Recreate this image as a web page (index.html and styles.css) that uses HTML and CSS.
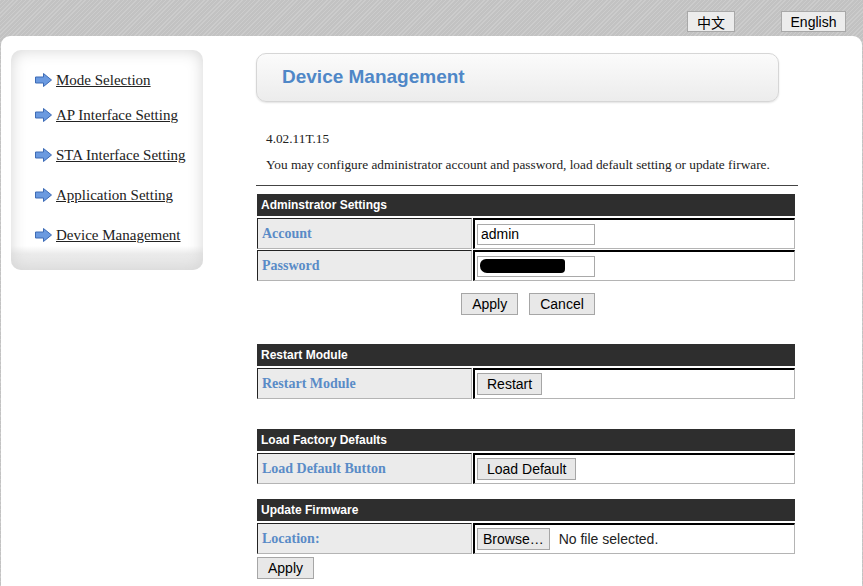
FILE: index.html
```html
<!DOCTYPE html>
<html lang="en">
<head>
    <meta charset="UTF-8">
    <meta name="viewport" content="width=device-width, initial-scale=1.0">
    <title>Device Management</title>
    <link rel="stylesheet" href="styles.css">
</head>
<body>
    <div class="lang-bar">
        <button class="lang-btn zh">中文</button>
        <button class="lang-btn en">English</button>
    </div>

    <div class="panel">
        <!-- Left menu -->
        <div class="side-menu">
            <a href="#"><svg class="arrow" viewBox="0 0 17 14"><polygon points="0.5,4 8.5,4 8.5,0.5 16.5,7 8.5,13.5 8.5,10 0.5,10"/></svg>Mode Selection</a>
            <a href="#"><svg class="arrow" viewBox="0 0 17 14"><polygon points="0.5,4 8.5,4 8.5,0.5 16.5,7 8.5,13.5 8.5,10 0.5,10"/></svg>AP Interface Setting</a>
            <a href="#"><svg class="arrow" viewBox="0 0 17 14"><polygon points="0.5,4 8.5,4 8.5,0.5 16.5,7 8.5,13.5 8.5,10 0.5,10"/></svg>STA Interface Setting</a>
            <a href="#"><svg class="arrow" viewBox="0 0 17 14"><polygon points="0.5,4 8.5,4 8.5,0.5 16.5,7 8.5,13.5 8.5,10 0.5,10"/></svg>Application Setting</a>
            <a href="#"><svg class="arrow" viewBox="0 0 17 14"><polygon points="0.5,4 8.5,4 8.5,0.5 16.5,7 8.5,13.5 8.5,10 0.5,10"/></svg>Device Management</a>
        </div>

        <!-- Main content -->
        <div class="main">
            <div class="page-title">
                <h1>Device Management</h1>
            </div>

            <p class="version">4.02.11T.15</p>
            <p class="intro">You may configure administrator account and password, load default setting or update firware.</p>
            <div class="rule"></div>

            <div class="section admin">
                <div class="section-head">Adminstrator Settings</div>
                <div class="row">
                    <div class="label">Account</div>
                    <div class="value"><input type="text" value="admin"></div>
                </div>
                <div class="row">
                    <div class="label">Password</div>
                    <div class="value"><span class="pw-box"><span class="pw-mask"></span></span></div>
                </div>
                <div class="actions">
                    <button class="btn">Apply</button>
                    <button class="btn">Cancel</button>
                </div>
            </div>

            <div class="section restart">
                <div class="section-head">Restart Module</div>
                <div class="row">
                    <div class="label">Restart Module</div>
                    <div class="value"><button class="btn small">Restart</button></div>
                </div>
            </div>

            <div class="section factory">
                <div class="section-head">Load Factory Defaults</div>
                <div class="row">
                    <div class="label">Load Default Button</div>
                    <div class="value"><button class="btn small">Load Default</button></div>
                </div>
            </div>

            <div class="section firmware">
                <div class="section-head">Update Firmware</div>
                <div class="row">
                    <div class="label">Location:</div>
                    <div class="value"><button class="btn browse">Browse…</button><span class="file-name">No file selected.</span></div>
                </div>
                <button class="btn apply-fw">Apply</button>
            </div>
        </div>
    </div>
</body>
</html>
```

FILE: styles.css
```css
body {
    margin: 0;
    padding: 0;
    font-family: "Liberation Serif", serif;
    background-color: #c8c8c8;
    background-image: repeating-linear-gradient(135deg, rgba(255,255,255,0.08) 0 1px, rgba(0,0,0,0.03) 1px 3px);
    overflow: hidden;
}

.lang-bar {
    height: 36px;
    display: flex;
    justify-content: flex-end;
    align-items: flex-start;
    padding-right: 17px;
    box-sizing: border-box;
}

.lang-btn {
    margin-top: 11px;
    height: 21px;
    padding: 0;
    font-family: "Liberation Sans", Arial, sans-serif;
    font-size: 14px;
    color: #000;
    background: #ececec;
    border: 1px solid #a8a8a8;
    border-radius: 0;
}

.lang-btn.zh {
    width: 48px;
    font-family: "Liberation Sans", "Noto Sans CJK SC", sans-serif;
    margin-right: 46px;
}

.lang-btn.en {
    width: 65px;
}

.panel {
    margin: 0 1px;
    height: 560px;
    background: #fff;
    border-radius: 9px 9px 0 0;
    display: flex;
    align-items: flex-start;
}

/* left menu */
.side-menu {
    width: 192px;
    height: 220px;
    margin: 14px 0 0 10px;
    box-sizing: border-box;
    padding: 20px 0 0 24px;
    border-radius: 10px;
    background: linear-gradient(to bottom, #fff 0, #fff 196px, #ebebeb 204px, #e6e6e6 100%);
    box-shadow: inset 0 0 16px #d4d4d4;
    display: flex;
    flex-direction: column;
}

.side-menu a {
    display: flex;
    align-items: center;
    height: 20px;
    margin-bottom: 20px;
    font-size: 15px;
    color: #222;
    text-decoration: underline;
    white-space: nowrap;
}

.side-menu a:first-child {
    margin-bottom: 15px;
}

.arrow {
    width: 17px;
    height: 14px;
    margin-right: 4px;
    flex-shrink: 0;
}

.arrow polygon {
    fill: #6b9ae0;
    stroke: #3d6bb5;
    stroke-width: 1;
}

/* main column */
.main {
    margin-left: 53px;
    width: 542px;
    padding-top: 17px;
}

.page-title {
    width: 523px;
    height: 49px;
    box-sizing: border-box;
    border: 1px solid #d6d6d6;
    border-radius: 10px;
    background: linear-gradient(to bottom, #fbfbfb, #ececec);
    box-shadow: 0 1px 2px #e2e2e2;
    padding-left: 25px;
    display: flex;
    align-items: center;
}

.page-title h1 {
    margin: 0 0 1px 0;
    font-family: "Liberation Sans", Arial, sans-serif;
    font-size: 19px;
    font-weight: bold;
    color: #4f87c7;
}

.version {
    margin: 29px 0 0 10px;
    font-size: 13.3px;
    color: #222;
}

.intro {
    margin: 10px 0 0 10px;
    font-size: 13.3px;
    color: #222;
}

.rule {
    margin-top: 12px;
    height: 1px;
    background: #444;
}

/* sections */
.section {
    width: 538px;
    margin-left: 1px;
}

.admin {
    margin-top: 8px;
}

.restart {
    margin-top: 29px;
}

.factory {
    margin-top: 30px;
}

.firmware {
    margin-top: 15px;
}

.section-head {
    height: 22px;
    line-height: 22px;
    padding-left: 4px;
    background: #2e2e2e;
    color: #fff;
    font-family: "Liberation Sans", Arial, sans-serif;
    font-size: 12px;
    font-weight: bold;
}

.row {
    display: grid;
    grid-template-columns: 215px 1fr;
    column-gap: 1px;
    margin-top: 2px;
    height: 31px;
}

.row + .row {
    margin-top: 1px;
}

.label,
.value {
    box-sizing: border-box;
    border: 1px solid;
    display: flex;
    align-items: center;
}

.label {
    background: #ebebeb;
    padding-left: 4px;
    border-color: #222 #b4b4b4 #b4b4b4 #222;
    font-size: 14px;
    font-weight: bold;
    color: #5a8bc7;
}

.value {
    background: #fff;
    padding-left: 2px;
    border-width: 2px 1px 1px 2px;
    border-color: #000 #b4b4b4 #b4b4b4 #000;
}

.value input,
.pw-box {
    width: 118px;
    height: 21px;
    box-sizing: border-box;
    border: 1px solid #a9a9a9;
    padding: 0 3px;
    font-family: "Liberation Sans", Arial, sans-serif;
    font-size: 14px;
    color: #000;
    background: #fff;
}

.pw-box {
    display: flex;
    align-items: center;
    padding: 0 2px;
}

.pw-mask {
    width: 85px;
    height: 14px;
    background: #000;
    border-radius: 6px 3px 4px 7px;
}

.btn {
    height: 22px;
    padding: 0 10px;
    font-family: "Liberation Sans", Arial, sans-serif;
    font-size: 14px;
    color: #000;
    background: #e8e8e8;
    border: 1px solid #a6a6a6;
    border-radius: 0;
}

.btn.small {
    padding: 0 9px;
}

.btn.browse {
    padding: 0 5px;
}

.actions {
    display: flex;
    justify-content: center;
    gap: 11px;
    margin-top: 12px;
    padding-left: 4px;
}

.file-name {
    margin-left: 9px;
    font-family: "Liberation Sans", Arial, sans-serif;
    font-size: 14px;
    color: #222;
}

.apply-fw {
    margin-top: 3px;
}
```
